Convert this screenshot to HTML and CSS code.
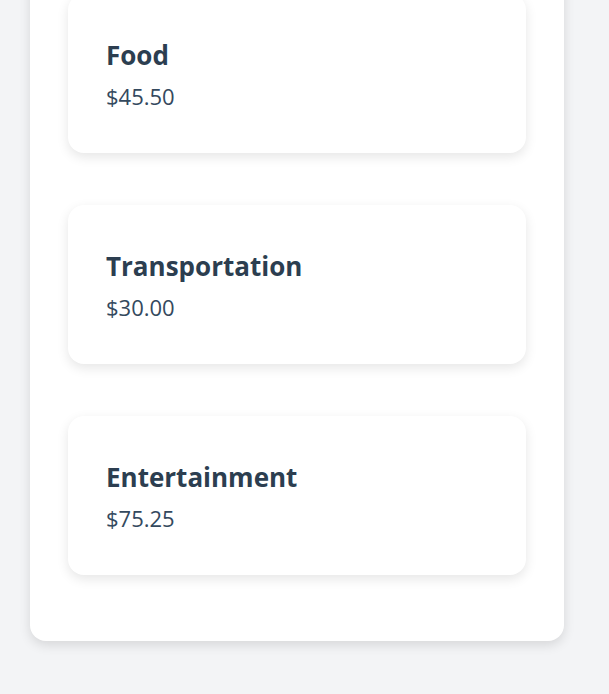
FILE: index.html
```html
<!DOCTYPE html>
<html lang="en">
<head>
<meta charset="utf-8">
<title>Expenses</title>
<link rel="stylesheet" href="styles.css">
</head>
<body>
  <main class="panel">
    <section class="expense-list">
      <article class="expense-card">
        <h3 class="expense-title">Food</h3>
        <p class="expense-amount">$45.50</p>
      </article>
      <article class="expense-card">
        <h3 class="expense-title">Transportation</h3>
        <p class="expense-amount">$30.00</p>
      </article>
      <article class="expense-card">
        <h3 class="expense-title">Entertainment</h3>
        <p class="expense-amount">$75.25</p>
      </article>
    </section>
  </main>
</body>
</html>
```

FILE: styles.css
```css
* { box-sizing: border-box; }
html, body { margin: 0; padding: 0; }
body {
  background: #f3f4f6;
  font-family: "Open Sans", "Noto Sans", sans-serif;
  color: #2c3e50;
  height: 694px;
  overflow: hidden;
}
.panel {
  width: 534px;
  margin: -44px 0 0 30px;
  padding: 38px 38px 66px;
  background: #ffffff;
  border-radius: 16px;
  box-shadow: 0 4px 12px rgba(0, 0, 0, 0.12);
}
.expense-list {
  display: flex;
  flex-direction: column;
  gap: 52px;
}
.expense-card {
  height: 159px;
  padding: 45px 38px 0;
  background: #ffffff;
  border-radius: 16px;
  box-shadow: 0 4px 12px rgba(0, 0, 0, 0.1);
}
.expense-title {
  margin: 0;
  font-size: 26px;
  line-height: 32px;
  font-weight: 700;
  color: #2c3e50;
}
.expense-amount {
  margin: 11px 0 0;
  font-size: 22px;
  line-height: 28px;
  color: #34495e;
}
```
